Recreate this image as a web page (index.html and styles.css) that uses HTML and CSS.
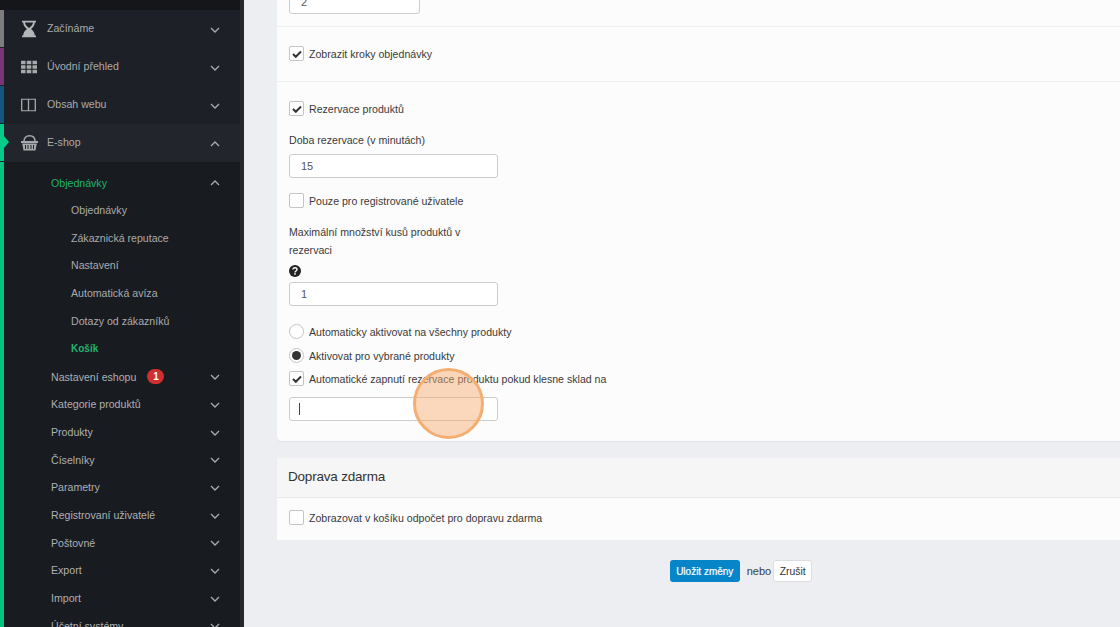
FILE: index.html
```html
<!DOCTYPE html>
<html lang="cs">
<head>
<meta charset="utf-8">
<title>E-shop</title>
<link rel="stylesheet" href="styles.css">
</head>
<body>
<div class="app">
  <aside class="sidebar">
    <div class="side-top"></div>
    <a class="main-item"><span class="strip s-grey"></span><svg class="mi mi-glass" width="14" height="17" viewBox="0 0 14 17"><path d="M0 0h14v2h-1.200c0 3-1.800 5-3.800 6.500 2 1.500 3.800 3.500 3.800 6.500H14v2H0v-2h1.200c0-3 1.800-5 3.800-6.500C3 7 1.200 5 1.200 2H0z" fill="#b4b6b9"/><path d="M3 2c.2 2.200 1.800 4 4 5.500C9.200 6 10.800 4.200 11 2z" fill="#1d2026"/></svg><span class="lbl">Začínáme</span><svg class="chev" width="10" height="6" viewBox="0 0 10 6"><path d="M1 1l4 4 4-4" /></svg></a>
    <a class="main-item"><span class="strip s-purple"></span><svg class="mi" width="16" height="13" viewBox="0 0 16 13" fill="#a7a9ac"><path d="M0 0h4.500v3.700H0zM5.700 0h4.600v3.700H5.700zM11.500 0H16v3.700h-4.500zM0 4.700h4.500v3.600H0zM5.700 4.700h4.600v3.600H5.700zM11.500 4.700H16v3.600h-4.500zM0 9.300h4.500V13H0zM5.700 9.300h4.600V13H5.700zM11.500 9.300H16V13h-4.500z"/></svg><span class="lbl">Úvodní přehled</span><svg class="chev" width="10" height="6" viewBox="0 0 10 6"><path d="M1 1l4 4 4-4" /></svg></a>
    <a class="main-item"><span class="strip s-blue"></span><svg class="mi" width="15" height="13" viewBox="0 0 15 13" fill="none" stroke="#a7a9ac" stroke-width="1.300"><path d="M.7.7h13.600v11.600H.7zM7.500.7v11.600"/></svg><span class="lbl">Obsah webu</span><svg class="chev" width="10" height="6" viewBox="0 0 10 6"><path d="M1 1l4 4 4-4" /></svg></a>
    <a class="main-item active"><span class="strip s-green"></span><span class="pointer"></span><svg class="mi" width="17" height="16" viewBox="0 0 17 16"><path d="M3 6.500C3 3 5 .8 8.500.8S14 3 14 6.500" fill="none" stroke="#a7a9ac" stroke-width="1.400"/><path d="M0 6h17v2H0zM1.200 8.500h14.600L14.500 15.500h-12z" fill="#a7a9ac"/><path d="M4.500 10v4M7 10v4M10 10v4M12.500 10v4" stroke="#22252b" stroke-width="1"/></svg><span class="lbl">E-shop</span><svg class="chev" width="10" height="6" viewBox="0 0 10 6"><path d="M1 5l4-4 4 4" /></svg></a>
    <div class="sub">
      <span class="strip-sub"></span>
      <a class="sub-item current"><span class="lbl">Objednávky</span><svg class="chev" width="10" height="6" viewBox="0 0 10 6"><path d="M1 5l4-4 4 4" /></svg></a>
      <div class="third">
        <a class="third-item">Objednávky</a>
        <a class="third-item">Zákaznická reputace</a>
        <a class="third-item">Nastavení</a>
        <a class="third-item">Automatická avíza</a>
        <a class="third-item">Dotazy od zákazníků</a>
        <a class="third-item on">Košík</a>
      </div>
      <a class="sub-item"><span class="lbl">Nastavení eshopu</span><span class="badge">1</span><svg class="chev" width="10" height="6" viewBox="0 0 10 6"><path d="M1 1l4 4 4-4" /></svg></a>
      <a class="sub-item"><span class="lbl">Kategorie produktů</span><svg class="chev" width="10" height="6" viewBox="0 0 10 6"><path d="M1 1l4 4 4-4" /></svg></a>
      <a class="sub-item"><span class="lbl">Produkty</span><svg class="chev" width="10" height="6" viewBox="0 0 10 6"><path d="M1 1l4 4 4-4" /></svg></a>
      <a class="sub-item"><span class="lbl">Číselníky</span><svg class="chev" width="10" height="6" viewBox="0 0 10 6"><path d="M1 1l4 4 4-4" /></svg></a>
      <a class="sub-item"><span class="lbl">Parametry</span><svg class="chev" width="10" height="6" viewBox="0 0 10 6"><path d="M1 1l4 4 4-4" /></svg></a>
      <a class="sub-item"><span class="lbl">Registrovaní uživatelé</span><svg class="chev" width="10" height="6" viewBox="0 0 10 6"><path d="M1 1l4 4 4-4" /></svg></a>
      <a class="sub-item"><span class="lbl">Poštovné</span><svg class="chev" width="10" height="6" viewBox="0 0 10 6"><path d="M1 1l4 4 4-4" /></svg></a>
      <a class="sub-item"><span class="lbl">Export</span><svg class="chev" width="10" height="6" viewBox="0 0 10 6"><path d="M1 1l4 4 4-4" /></svg></a>
      <a class="sub-item"><span class="lbl">Import</span><svg class="chev" width="10" height="6" viewBox="0 0 10 6"><path d="M1 1l4 4 4-4" /></svg></a>
      <a class="sub-item"><span class="lbl">Účetní systémy</span><svg class="chev" width="10" height="6" viewBox="0 0 10 6"><path d="M1 1l4 4 4-4" /></svg></a>
    </div>
  </aside>
  <main class="main">
    <section class="card card-top">
      <div class="row row-clip"><div class="input input-sm">2</div></div>
      <div class="row row-check"><label class="check"><span class="box on"><svg width="10" height="8" viewBox="0 0 10 8"><path d="M1 4l2.800 2.800L9 1.500" fill="none" stroke="#333" stroke-width="2"/></svg></span>Zobrazit kroky objednávky</label></div>
      <div class="row row-form">
        <label class="check"><span class="box on"><svg width="10" height="8" viewBox="0 0 10 8"><path d="M1 4l2.800 2.800L9 1.500" fill="none" stroke="#333" stroke-width="2"/></svg></span>Rezervace produktů</label>
        <div class="field-label f1">Doba rezervace (v minutách)</div>
        <div class="input">15</div>
        <label class="check c2"><span class="box"></span>Pouze pro registrované uživatele</label>
        <div class="field-label wrap">Maximální množství kusů produktů v rezervaci</div>
        <svg class="help" width="12" height="12" viewBox="0 0 12 12"><circle cx="6" cy="6" r="6" fill="#222"/><path d="M4 4.600C4 3.400 4.900 2.700 6 2.700s2 .7 2 1.800c0 1.500-2 1.400-2 3" fill="none" stroke="#fff" stroke-width="1.400"/><rect x="5.200" y="8.200" width="1.600" height="1.500" fill="#fff"/></svg>
        <div class="input i3">1</div>
        <label class="check c3"><span class="radio"></span>Automaticky aktivovat na všechny produkty</label>
        <label class="check c4"><span class="radio on"></span>Aktivovat pro vybrané produkty</label>
        <label class="check c5"><span class="box on"><svg width="10" height="8" viewBox="0 0 10 8"><path d="M1 4l2.800 2.800L9 1.500" fill="none" stroke="#333" stroke-width="2"/></svg></span>Automatické zapnutí rezervace produktu pokud klesne sklad na</label>
        <div class="input i4"><span class="caret"></span></div>
      </div>
    </section>
    <section class="card card-free">
      <h2 class="card-head">Doprava zdarma</h2>
      <div class="free-body"><label class="check"><span class="box"></span>Zobrazovat v košíku odpočet pro dopravu zdarma</label></div>
    </section>
    <div class="actions">
      <button class="btn-save">Uložit změny</button>
      <span class="or">nebo</span>
      <button class="btn-cancel">Zrušit</button>
    </div>
    <span class="click-mark"></span>
  </main>
</div>
</body>
</html>
```
FILE: styles.css
```css
* { box-sizing: border-box; }
html, body { margin: 0; height: 100%; overflow: hidden; }
body { background: #eceef2; font-family: "Liberation Sans", Arial, sans-serif; font-size: 10.600px; color: #3a3a3a; }
.app { display: flex; height: 627px; overflow: hidden; }
.sidebar { width: 244px; flex: none; background: #181b20; border-right: 4px solid #24272c; overflow: hidden; }
.side-top { height: 10px; background: #14161a; margin-right: -4px; }
.main-item { position: relative; display: flex; align-items: center; height: 38px; padding-left: 47px; padding-right: 20px; background: #1d2026; color: #a9abae; }
.main-item.active { background: #22252b; }
.strip { position: absolute; left: 0; top: 0; bottom: 1px; width: 4px; }
.s-grey { background: #7d7d7d; }
.s-purple { background: #7b3476; }
.s-blue { background: #12557f; }
.s-green { background: #05cb88; }
.pointer { position: absolute; left: 4px; top: 12px; border-left: 5px solid #05cb88; border-top: 6px solid transparent; border-bottom: 6px solid transparent; }
.mi { position: absolute; left: 21px; top: 50%; transform: translateY(-50%); }
.mi-glass { left: 22px; }
.main-item .lbl { flex: 1; padding-bottom: 2px; }
.main-item .chev { margin-top: 2px; }
.chev { fill: none; stroke: #a9abae; stroke-width: 1.300; flex: none; }
.sub { position: relative; padding-top: 7px; }
.strip-sub { position: absolute; left: 0; top: 0; bottom: 0; width: 4px; background: #05c480; }
.sub-item { display: flex; align-items: center; height: 27.700px; padding-left: 51px; padding-right: 20px; color: #aeb0b3; }
.sub-item .lbl { margin-right: 11px; }
.sub-item .chev { margin-left: auto; margin-top: 1px; }
.sub-item.current { color: #1fb36d; }
.third { display: flex; flex-direction: column; }
.third-item { display: flex; align-items: center; height: 27.700px; padding-left: 71px; padding-bottom: 1px; color: #a9abae; }
.third-item.on { color: #1fb36d; font-weight: bold; font-size: 10px; padding-bottom: 0; }
.badge { width: 17px; height: 15px; border-radius: 8px; background: #d12f2f; color: #fff; font-size: 10px; font-weight: bold; text-align: center; line-height: 15px; }
.main { position: relative; flex: 1; padding-left: 33px; min-width: 0; }
.card { background: #fcfcfc; }
.card-top { height: 441px; border-radius: 0 0 0 5px; box-shadow: 0 1px 1px #e2e3e7; }
.row { border-bottom: 1px solid #eeeff1; padding-left: 12px; }
.row-clip { height: 27px; display: flow-root; }
.row-check { height: 55px; padding-top: 19px; }
.row-form { border: 0; padding-top: 19px; }
.input { width: 209px; height: 24px; border: 1px solid #ccc; border-radius: 3px; background: #fff; padding-left: 11px; line-height: 22px; color: #555; font-size: 11px; }
.input-sm { width: 131px; margin-top: -10px; }
.check { display: flex; align-items: center; height: 15px; color: #3a3a3a; }
.box { display: inline-flex; align-items: center; justify-content: center; width: 15px; height: 15px; margin-right: 5px; border: 1px solid #c4c4c4; border-radius: 2px; background: #fff; flex: none; }
.radio { position: relative; width: 15px; height: 15px; margin-right: 5px; border: 1px solid #c4c4c4; border-radius: 50%; background: #fff; flex: none; }
.radio.on::after { content: ""; position: absolute; left: 2px; top: 2px; width: 9px; height: 9px; border-radius: 50%; background: #333; }
.field-label { color: #3a3a3a; }
.f1 { margin-top: 17px; margin-bottom: 7px; line-height: 14px; }
.c2 { margin-top: 15px; }
.wrap { width: 190px; line-height: 18px; margin-top: 15px; }
.help { display: block; margin-top: 6px; }
.i3 { margin-top: 5px; }
.c3 { margin-top: 18px; }
.c4 { margin-top: 9px; }
.c5 { margin-top: 8px; }
.i4 { margin-top: 11px; position: relative; }
.caret { position: absolute; left: 9px; top: 5px; width: 1px; height: 12px; background: #444; }
.card-free { margin-top: 17px; height: 82px; }
.card-head { margin: 0; height: 40px; padding-left: 11px; background: #f6f6f7; border-bottom: 1px solid #e8e9eb; font-size: 13.500px; font-weight: normal; letter-spacing: -.2px; line-height: 38px; color: #333; }
.free-body { padding: 12px 12px 0; }
.actions { display: flex; align-items: center; justify-content: center; gap: 4px; margin-top: 20px; padding-left: 85px; }
.btn-save { height: 22px; width: 70px; padding: 0; border: 0; border-radius: 3px; background: #0685c9; color: #fff; font: 10px "Liberation Sans", Arial, sans-serif; -webkit-text-stroke: .2px #fff; }
.or { font-size: 11px; color: #3a3a3a; margin: 0 -2px 0 3px; }
.btn-cancel { height: 22px; width: 39px; padding: 0; border: 1px solid #ddd; border-radius: 3px; background: #fff; color: #333; font: 10.400px "Liberation Sans", Arial, sans-serif; }
.click-mark { position: absolute; left: 169px; top: 368px; width: 71px; height: 71px; border-radius: 50%; background: rgba(247, 168, 104, .45); border: 3px solid #f5ae72; }
```
